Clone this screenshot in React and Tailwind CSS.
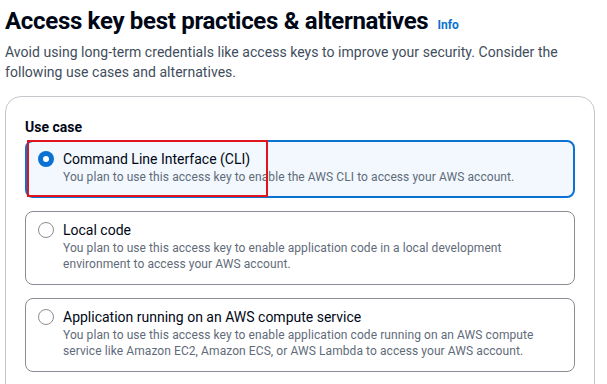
const OPTIONS = [
  {
    title: "Command Line Interface (CLI)",
    desc: ["You plan to use this access key to enable the AWS CLI to access your AWS account."],
    selected: true,
  },
  {
    title: "Local code",
    desc: [
      "You plan to use this access key to enable application code in a local development",
      "environment to access your AWS account.",
    ],
  },
  {
    title: "Application running on an AWS compute service",
    desc: [
      "You plan to use this access key to enable application code running on an AWS compute",
      "service like Amazon EC2, Amazon ECS, or AWS Lambda to access your AWS account.",
    ],
  },
  { title: "Third-party service", desc: ["You plan to use this access key to enable access for a third-party application or service."] },
];

function Radio({ checked }) {
  if (checked) {
    return (
      <span className="mt-[2px] flex h-4 w-4 shrink-0 items-center justify-center rounded-full bg-[#0972d3]">
        <span className="h-[6px] w-[6px] rounded-full bg-white" />
      </span>
    );
  }
  return <span className="mt-[2px] h-4 w-4 shrink-0 rounded-full border-[1.5px] border-[#8c8c94] bg-white" />;
}

function Tile({ option }) {
  const sel = option.selected;
  return (
    <div
      className={
        sel
          ? "relative flex gap-[9px] rounded-lg border-2 border-[#0972d3] bg-[#f2f8fd] pl-[11px] pr-3 pt-[7px] pb-[11px]"
          : "relative flex gap-[9px] rounded-lg border border-[#8c8c94] bg-white pl-3 pr-3 pt-2 pb-3"
      }
    >
      <Radio checked={sel} />
      <div>
        <p className="text-[14px] leading-5 text-[#000716]">{option.title}</p>
        {option.desc.map((d) => (
          <p key={d} className="whitespace-nowrap text-[12px] leading-4 tracking-[0.08px] text-[#5f6b7a]">{d}</p>
        ))}
      </div>
      {sel && (
        <div className="absolute left-[0px] top-[-2px] h-[57px] w-[241px] border-[2.5px] border-[#e0141e]" />
      )}
    </div>
  );
}

export default function App() {
  return (
    <div className="h-[384px] overflow-hidden bg-white px-[5px] pt-[7px]" style={{ fontFamily: "Roboto, 'Open Sans', sans-serif" }}>
      <div className="flex items-baseline gap-[9px]">
        <h1 className="text-[24px] font-bold leading-7 tracking-[-0.3px] text-[#000716]">Access key best practices &amp; alternatives</h1>
        <a className="text-[12px] font-bold text-[#0972d3]">Info</a>
      </div>
      <p className="mt-[7px] w-[590px] text-[14px] leading-5 tracking-[0.04px] text-[#414d5c]">
        Avoid using long-term credentials like access keys to improve your security. Consider the following use cases and alternatives.
      </p>
      <div className="mt-[14px] w-[590px] rounded-2xl border border-[#c6c6cd] px-[19px] pt-[20px] pb-6">
        <p className="mb-[3px] text-[14px] font-bold leading-5 text-[#000716]">Use case</p>
        <div className="flex w-[550px] flex-col gap-[13px]">
          {OPTIONS.map((o) => (
            <Tile key={o.title} option={o} />
          ))}
        </div>
      </div>
    </div>
  );
}
